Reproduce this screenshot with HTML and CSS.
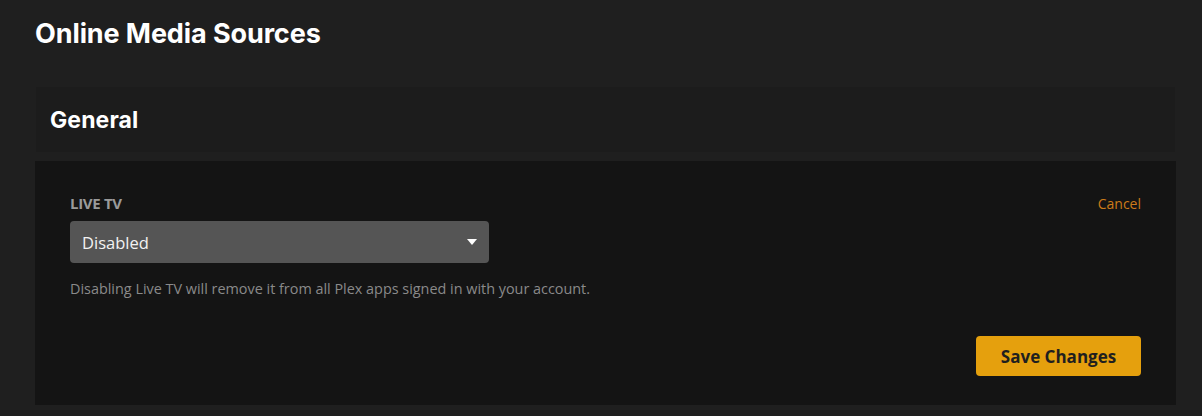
FILE: index.html
```html
<!DOCTYPE html>
<html>
<head>
<meta charset="utf-8">
<link rel="stylesheet" href="styles.css">
</head>
<body>
<div class="page">
  <h1 class="page-title">Online Media Sources</h1>
  <section class="card">
    <header class="card-header">
      <h2 class="card-title">General</h2>
    </header>
    <div class="card-body">
      <div class="setting-row">
        <div class="setting">
          <label class="setting-label">LIVE TV</label>
          <div class="select">
            <span class="select-value">Disabled</span>
            <svg class="select-caret" width="10" height="6" viewBox="0 0 10 6"><path d="M0 0H10L5 6Z" fill="#fff"/></svg>
          </div>
          <p class="setting-help">Disabling Live TV will remove it from all Plex apps signed in with your account.</p>
        </div>
        <a class="cancel-link">Cancel</a>
      </div>
      <div class="actions">
        <button class="save-button">Save Changes</button>
      </div>
    </div>
  </section>
</div>
</body>
</html>
```

FILE: styles.css
```css
html, body {
  margin: 0;
  padding: 0;
  background: #1f1f1f;
  height: 100%;
}
body {
  font-family: "Open Sans", "Noto Sans", sans-serif;
  color: #eee;
}
.page {
  padding: 17px 26px 0 35px;
}
.page-title {
  margin: 0;
  font-family: Inter, "Noto Sans", sans-serif;
  font-weight: 700;
  font-size: 27px;
  line-height: 34px;
  color: #fff;
  letter-spacing: -0.1px;
}
.card {
  margin-top: 36px;
}
.card-header {
  background: #1c1c1c;
  height: 65px;
  display: flex;
  align-items: center;
  padding: 0 14px;
  margin: 0 1px 9px;
}
.card-title {
  margin: 0;
  font-family: Inter, "Noto Sans", sans-serif;
  font-weight: 700;
  font-size: 23px;
  color: #fff;
  letter-spacing: 0.1px;
}
.card-body {
  background: #141414;
  padding: 32px 35px 29px;
  height: 244px;
  box-sizing: border-box;
  display: flex;
  flex-direction: column;
}
.setting-row {
  display: flex;
  justify-content: space-between;
  align-items: flex-start;
}
.setting-label {
  display: block;
  font-size: 15px;
  font-weight: 700;
  color: #9a9a9a;
  letter-spacing: -0.3px;
  line-height: 20px;
  margin-bottom: 8px;
}
.select {
  width: 419px;
  height: 42px;
  box-sizing: border-box;
  background: #555555;
  border-radius: 4px;
  display: flex;
  align-items: center;
  justify-content: space-between;
  padding: 0 12px 0 12px;
}
.select-value {
  font-size: 16.5px;
  color: #f2f2f2;
}
.select-caret {
  display: block;
}
.setting-help {
  margin: 17px 0 0;
  font-size: 14.4px;
  color: #8a8a8a;
  line-height: 18px;
}
.cancel-link {
  font-size: 14px;
  color: #cc7b19;
  line-height: 20px;
  margin-top: 1px;
  cursor: pointer;
}
.actions {
  display: flex;
  justify-content: flex-end;
  margin-top: auto;
}
.save-button {
  background: #e5a00d;
  border: none;
  border-radius: 4px;
  width: 165px;
  height: 40px;
  font-family: "Open Sans", "Noto Sans", sans-serif;
  font-size: 17px;
  font-weight: 700;
  color: #1f1f1f;
  padding: 0;
}
```
